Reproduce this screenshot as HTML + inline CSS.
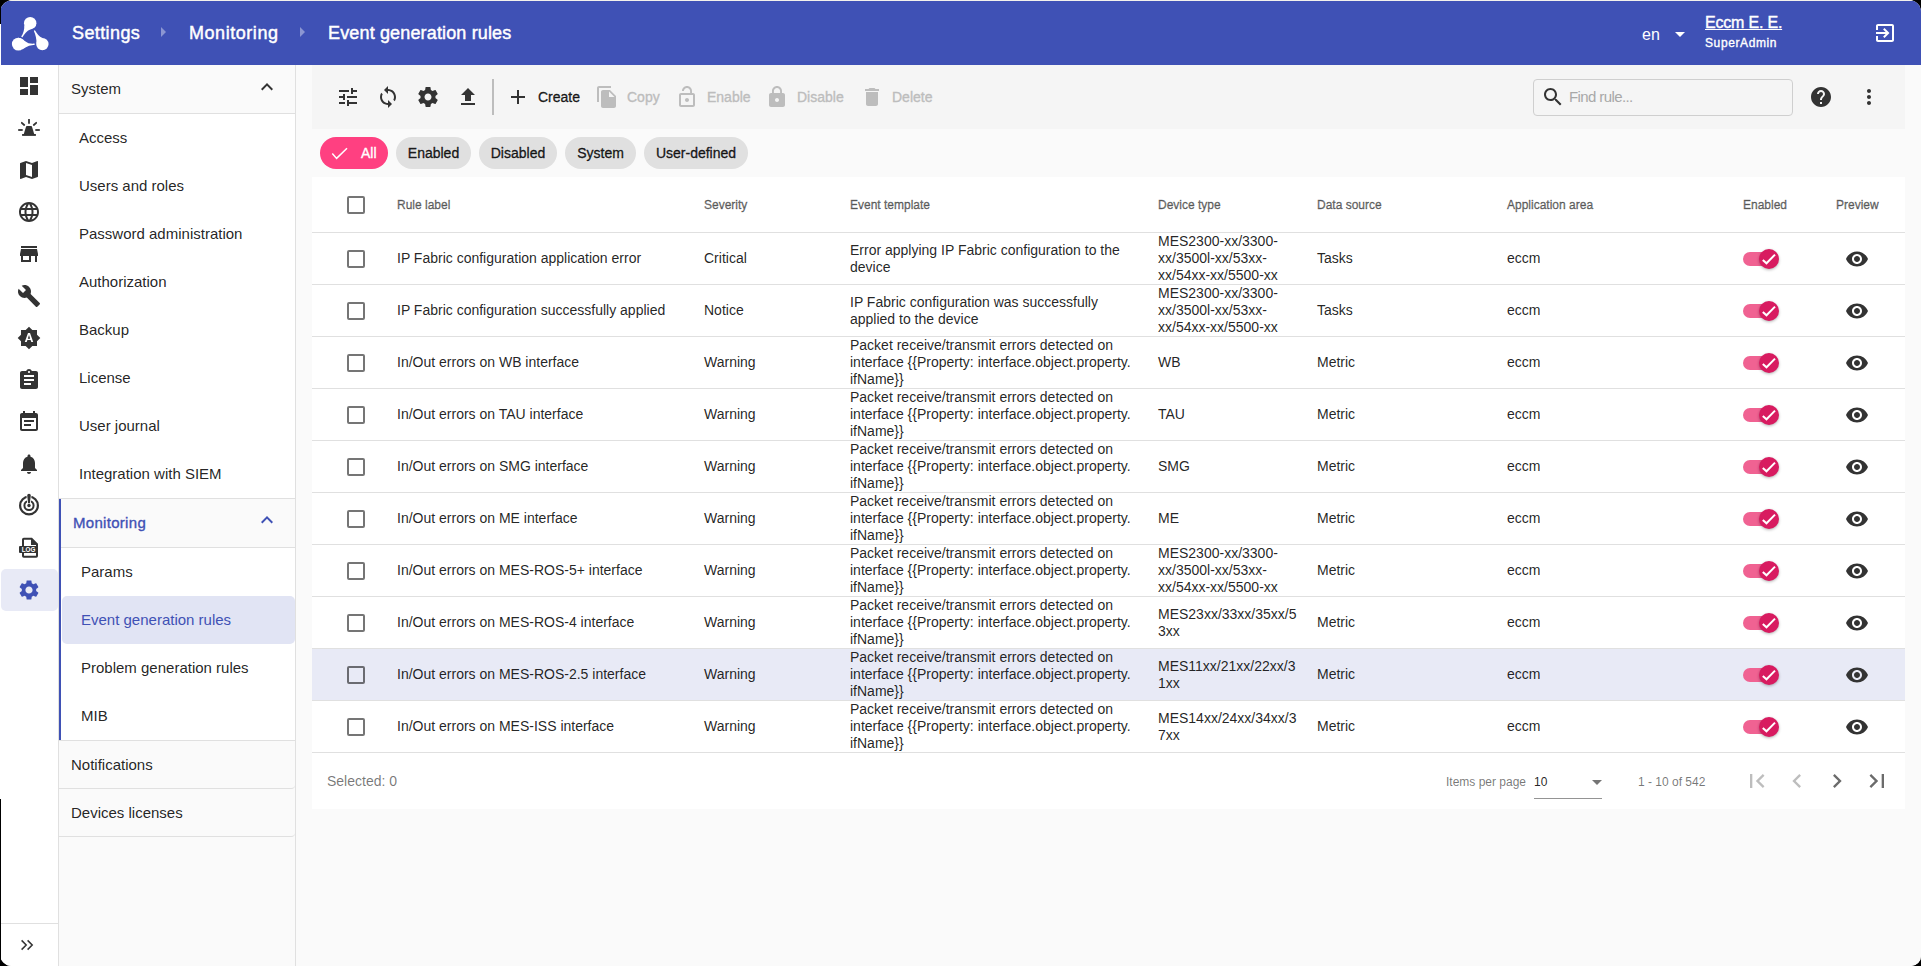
<!DOCTYPE html>
<html><head><meta charset="utf-8"><style>
*{box-sizing:border-box;margin:0;padding:0}
html,body{width:1921px;height:966px;overflow:hidden;background:#000}
body{font-family:"Liberation Sans",sans-serif;color:rgba(0,0,0,.87);position:relative}
.a{position:absolute}
svg{display:block}
.t{position:absolute;white-space:nowrap;line-height:1}
#win{position:absolute;left:0;top:0;width:1921px;height:966px;background:#fff;border-radius:13px 12px 10px 12px;overflow:hidden}
#hdr{position:absolute;left:1px;top:1px;width:1920px;height:64px;background:#3f51b5;color:#fff}
.bc{font-size:18px;font-weight:400;letter-spacing:.15px;top:23px;color:#fff;-webkit-text-stroke:.45px #fff}
.md{font-weight:400;-webkit-text-stroke:.4px currentColor}
#rail{position:absolute;left:0;top:65px;width:59px;height:901px;background:#fff;border-right:1px solid #e0e0e0}
.ri{position:absolute;left:17px;width:24px;height:24px;fill:#333}
#nav{position:absolute;left:59px;top:65px;width:237px;height:901px;background:#fafafa;border-right:1px solid #e0e0e0}
.ns{position:absolute;left:0;width:236px;background:#fafafa;border-bottom:1px solid #e0e0e0}
.nt{position:absolute;font-size:15px;white-space:nowrap;line-height:1;color:rgba(0,0,0,.87)}
#main{position:absolute;left:296px;top:65px;width:1625px;height:901px;background:#fafafa}
#tb{position:absolute;left:16px;top:0;width:1593px;height:64px;background:#f5f5f5}
.tl{position:absolute;top:25px;font-size:14px;font-weight:400;-webkit-text-stroke:.35px currentColor;line-height:1;white-space:nowrap}
.dis{color:#bdbdbd}
.chip{position:absolute;top:72px;height:32px;border-radius:16px;background:#e0e0e0;font-size:14px;font-weight:400;-webkit-text-stroke:.35px currentColor;line-height:32px;text-align:center;white-space:nowrap;color:rgba(0,0,0,.87)}
#card{position:absolute;left:16px;top:112px;width:1593px;height:632px;background:#fff}
.row{position:absolute;left:0;width:1593px;height:52px;border-bottom:1px solid #e0e0e0}
.cb{position:absolute;left:35px;width:18px;height:18px;border:2px solid rgba(0,0,0,.54);border-radius:2px}
.c{position:absolute;font-size:14px;line-height:17px;white-space:nowrap}
.hc{position:absolute;top:22px;font-size:12px;font-weight:400;-webkit-text-stroke:.4px currentColor;color:rgba(0,0,0,.54);line-height:1;white-space:nowrap}
</style></head><body><div id="win">
<div class="a" style="left:0;top:0;width:1921px;height:1px;background:#f3f1ec"></div>
<div id="hdr">
<svg class="a" style="left:-1px;top:-1px" width="60" height="60" viewBox="0 0 60 60"><g fill="#fff">
<circle cx="30.2" cy="23.2" r="6.2"/><circle cx="18.3" cy="44.1" r="6.4"/><circle cx="42.4" cy="44.1" r="6.2"/>
<path d="M24.3 25.5 C24.4 30 23.3 33.5 21.2 36.6 L22.3 37.4 C24.5 34 26.5 31 30.5 29.3 Z"/>
<path d="M18 37.8 C22.5 38 25 41.8 28.5 43.2 C30.5 43.7 32.5 43.7 34.6 43.6 L34.6 45.1 C31 45.2 27.5 45.8 22.5 49.5 Z"/>
<path d="M36.6 43 C36.4 39 35.8 35.5 33.8 30.8 L34.9 30.2 C37.2 33.8 39 36.6 42.5 37.9 Z"/>
</g></svg>
<div class="t bc" style="left:71px;letter-spacing:.4px">Settings</div>
<svg class="a" style="left:150px;top:19px" width="24" height="24" viewBox="0 0 24 24"><path d="M10 17l5-5-5-5v10z" fill="rgba(255,255,255,.4)"/></svg>
<div class="t bc" style="left:188px;letter-spacing:.55px">Monitoring</div>
<svg class="a" style="left:289px;top:19px" width="24" height="24" viewBox="0 0 24 24"><path d="M10 17l5-5-5-5v10z" fill="rgba(255,255,255,.4)"/></svg>
<div class="t bc" style="left:327px">Event generation rules</div>
<div class="t" style="left:1641px;top:26px;font-size:16px;color:#fff">en</div>
<svg class="a" style="left:1667px;top:21px" width="24" height="24" viewBox="0 0 24 24"><path d="M7 10l5 5 5-5z" fill="#fff"/></svg>
<div class="t" style="left:1704px;top:14px;font-size:16px;color:#fff;text-decoration:underline;-webkit-text-stroke:.4px #fff;letter-spacing:-.2px">Eccm E. E.</div>
<div class="t" style="left:1704px;top:36px;font-size:12px;-webkit-text-stroke:.35px #fff;letter-spacing:.6px;color:#fff">SuperAdmin</div>
<svg class="a" style="left:1872px;top:20px" width="24" height="24" viewBox="0 0 24 24"><path d="M10.09 15.59L11.5 17l5-5-5-5-1.41 1.41L12.67 11H3v2h9.67l-2.58 2.59zM19 3H5c-1.11 0-2 .9-2 2v4h2V5h14v14H5v-4H3v4c0 1.1.89 2 2 2h14c1.1 0 2-.9 2-2V5c0-1.1-.9-2-2-2z" fill="#fff"/></svg>
</div>
<div id="rail">
<svg class="ri" style="left:17px;top:9px" width="24" height="24" viewBox="0 0 24 24"><path d="M3 13h8V3H3v10zm0 8h8v-6H3v6zm10 0h8V11h-8v10zm0-18v6h8V3h-8z" fill="#333"/></svg>
<svg class="ri" style="left:17px;top:93px" width="24" height="24" viewBox="0 0 24 24"><path d="M20.5 3l-.16.03L15 5.1 9 3 3.36 4.9c-.21.07-.36.25-.36.48V20.5c0 .28.22.5.5.5l.16-.03L9 18.9l6 2.1 5.64-1.9c.21-.07.36-.25.36-.48V3.5c0-.28-.22-.5-.5-.5zM15 19l-6-2.11V5l6 2.11V19z" fill="#333"/></svg>
<svg class="ri" style="left:17px;top:135px" width="24" height="24" viewBox="0 0 24 24"><path d="M11.99 2C6.47 2 2 6.48 2 12s4.47 10 9.99 10C17.52 22 22 17.52 22 12S17.52 2 11.99 2zm6.93 6h-2.95c-.32-1.25-.78-2.45-1.38-3.56 1.84.63 3.37 1.91 4.33 3.56zM12 4.04c.83 1.2 1.48 2.53 1.91 3.96h-3.82c.43-1.43 1.08-2.76 1.91-3.96zM4.26 14C4.1 13.36 4 12.69 4 12s.1-1.36.26-2h3.38c-.08.66-.14 1.32-.14 2 0 .68.06 1.34.14 2H4.26zm.82 2h2.95c.32 1.25.78 2.45 1.38 3.56-1.84-.63-3.37-1.9-4.33-3.56zm2.95-8H5.08c.96-1.66 2.49-2.93 4.33-3.56C8.81 5.55 8.35 6.75 8.03 8zM12 19.96c-.83-1.2-1.48-2.53-1.91-3.96h3.82c-.43 1.43-1.08 2.76-1.91 3.96zM14.34 14H9.66c-.09-.66-.16-1.32-.16-2 0-.68.07-1.35.16-2h4.68c.09.65.16 1.32.16 2 0 .68-.07 1.34-.16 2zm.25 5.56c.6-1.11 1.06-2.31 1.38-3.56h2.95c-.96 1.65-2.49 2.93-4.33 3.56zM16.36 14c.08-.66.14-1.32.14-2 0-.68-.06-1.34-.14-2h3.38c.16.64.26 1.31.26 2s-.1 1.36-.26 2h-3.38z" fill="#333"/></svg>
<svg class="ri" style="left:17px;top:177px" width="24" height="24" viewBox="0 0 24 24"><path d="M20 4H4v2h16V4zm1 10v-2l-1-5H4l-1 5v2h1v6h10v-6h4v6h2v-6h1zm-9 4H6v-4h6v4z" fill="#333"/></svg>
<svg class="ri" style="left:17px;top:219px" width="24" height="24" viewBox="0 0 24 24"><path d="M22.7 19l-9.1-9.1c.9-2.3.4-5-1.5-6.9-2-2-5-2.4-7.4-1.3L9 6 6 9 1.6 4.7C.4 7.1.9 10.1 2.9 12.1c1.9 1.9 4.6 2.4 6.9 1.5l9.1 9.1c.4.4 1 .4 1.4 0l2.3-2.3c.5-.4.5-1.1.1-1.4z" fill="#333"/></svg>
<svg class="ri" style="left:17px;top:261px" width="24" height="24" viewBox="0 0 24 24"><path d="M10.85 12.65h2.3L12 9l-1.15 3.65zM20 8.69V4h-4.69L12 .69 8.69 4H4v4.69L.69 12 4 15.31V20h4.69L12 23.31 15.31 20H20v-4.69L23.31 12 20 8.69zM14.3 16l-.7-2h-3.2l-.7 2H7.8L11 7h2l3.2 9h-1.9z" fill="#333"/></svg>
<svg class="ri" style="left:17px;top:303px" width="24" height="24" viewBox="0 0 24 24"><path d="M19 3h-4.18C14.4 1.84 13.3 1 12 1c-1.3 0-2.4.84-2.82 2H5c-1.1 0-2 .9-2 2v14c0 1.1.9 2 2 2h14c1.1 0 2-.9 2-2V5c0-1.1-.9-2-2-2zm-7 0c.55 0 1 .45 1 1s-.45 1-1 1-1-.45-1-1 .45-1 1-1zm2 14H7v-2h7v2zm3-4H7v-2h10v2zm0-4H7V7h10v2z" fill="#333"/></svg>
<svg class="ri" style="left:17px;top:345px" width="24" height="24" viewBox="0 0 24 24"><path d="M17 10H7v2h10v-2zm2-7h-1V1h-2v2H8V1H6v2H5c-1.11 0-1.99.9-1.99 2L3 19c0 1.1.89 2 2 2h14c1.1 0 2-.9 2-2V5c0-1.1-.9-2-2-2zm0 16H5V8h14v11zm-5-5H7v2h7v-2z" fill="#333"/></svg>
<svg class="ri" style="left:17px;top:387px" width="24" height="24" viewBox="0 0 24 24"><path d="M12 22c1.1 0 2-.9 2-2h-4c0 1.1.89 2 2 2zm6-6v-5c0-3.07-1.64-5.64-4.5-6.32V4c0-.83-.67-1.5-1.5-1.5s-1.5.67-1.5 1.5v.68C7.63 5.36 6 7.920 6 11v5l-2 2v1h16v-1l-2-2z" fill="#333"/></svg>
<svg class="a" style="left:14px;top:47px" width="30" height="30" viewBox="0 0 30 30"><g fill="#333">
<rect x="14.1" y="7" width="1.8" height="4.8" rx=".3"/>
<path d="M7.8 10.8 L10.2 13" stroke="#333" stroke-width="1.8" stroke-linecap="round"/>
<path d="M22.2 10.8 L19.8 13" stroke="#333" stroke-width="1.8" stroke-linecap="round"/>
<rect x="4.2" y="17.1" width="4.5" height="1.8"/><rect x="21.3" y="17.1" width="4.5" height="1.8"/>
<path d="M12.8 14.1 H17.2 Q17.8 14.1 18 14.7 L20.2 22 H9.8 L12 14.7 Q12.2 14.1 12.8 14.1Z"/>
<rect x="8.1" y="22" width="13.8" height="1.9"/></g></svg>
<svg class="ri" style="top:428px" viewBox="0 0 24 24">
<circle cx="12" cy="12.5" r="8.9" fill="none" stroke="#333" stroke-width="2.2"/>
<circle cx="12" cy="12.5" r="4.6" fill="none" stroke="#333" stroke-width="2"/>
<path d="M9.2 0h5.6l-1.1 11h-3.4z" fill="#fff"/>
<path d="M10.2 2.6 a1.8 1.8 0 0 1 3.6 0 L12.9 10.3 h-1.8 Z" fill="#333"/>
<circle cx="12" cy="12.5" r="1.7" fill="#333"/></svg>
<svg class="ri" style="top:471px" viewBox="0 0 24 24">
<path fill="#333" fill-rule="evenodd" d="M6.8 1.8H15L21 7.8V20a1.8 1.8 0 0 1-1.8 1.8H6.8A1.8 1.8 0 0 1 5 20V3.6A1.8 1.8 0 0 1 6.8 1.8zM7 3.8V10h12V9h-5V3.8zM7 17v2.8h12V17z"/>
<rect x="2" y="10" width="19" height="7" rx="1" fill="#333"/>
<text x="11.6" y="15.6" font-size="6.3" font-weight="700" text-anchor="middle" font-family="Liberation Sans" fill="#fff">LOG</text></svg>
<div class="a" style="left:1px;top:504px;width:57px;height:42px;background:#e8eaf6;border-radius:5px"></div>
<svg class="a" style="left:17px;top:513px" width="24" height="24" viewBox="0 0 24 24"><path d="M19.14 12.94c.04-.3.06-.61.06-.94 0-.32-.02-.64-.07-.94l2.03-1.58c.18-.14.23-.41.12-.61l-1.92-3.32c-.12-.22-.37-.29-.59-.22l-2.39.96c-.5-.38-1.030-.7-1.62-.94l-.36-2.54c-.04-.24-.24-.41-.48-.41h-3.84c-.24 0-.43.17-.47.41l-.36 2.54c-.59.24-1.13.57-1.62.94l-2.39-.96c-.22-.08-.47 0-.59.22L2.74 8.87c-.12.21-.08.47.12.61l2.03 1.58c-.05.3-.09.63-.09.94s.02.64.07.94l-2.03 1.58c-.18.14-.23.41-.12.61l1.92 3.32c.12.22.37.29.59.22l2.39-.96c.5.38 1.03.7 1.62.94l.36 2.54c.05.24.24.41.48.41h3.84c.24 0 .44-.17.47-.41l.36-2.54c.59-.24 1.13-.56 1.62-.94l2.39.96c.22.08.47 0 .59-.22l1.92-3.32c.12-.22.07-.47-.12-.61l-2.01-1.58zM12 15.6c-1.98 0-3.6-1.62-3.6-3.6s1.62-3.6 3.6-3.6 3.6 1.62 3.6 3.6-1.62 3.6-3.6 3.6z" fill="#3f51b5"/></svg>
<div class="a" style="left:0;top:858px;width:58px;height:1px;background:#e0e0e0"></div>
<svg class="a" style="left:15px;top:868px" width="24" height="24" viewBox="0 0 24 24"><path d="M6.6 7.4 L11.2 12 L6.6 16.6 M12.6 7.4 L17.2 12 L12.6 16.6" fill="none" stroke="#333" stroke-width="1.5"/></svg>
</div>
<div id="nav">
<div class="ns" style="top:0;height:49px"></div>
<div class="nt" style="left:12px;top:16px">System</div>
<svg class="a" style="left:196px;top:10px" width="24" height="24" viewBox="0 0 24 24"><path d="M12 8l-6 6 1.41 1.41L12 10.83l4.59 4.58L18 14z" fill="#333"/></svg>
<div class="a" style="left:0;top:49px;width:236px;height:385px;background:#fff;border-bottom:1px solid #e0e0e0"></div>
<div class="nt" style="left:20px;top:65px">Access</div>
<div class="nt" style="left:20px;top:113px">Users and roles</div>
<div class="nt" style="left:20px;top:161px">Password administration</div>
<div class="nt" style="left:20px;top:209px">Authorization</div>
<div class="nt" style="left:20px;top:257px">Backup</div>
<div class="nt" style="left:20px;top:305px">License</div>
<div class="nt" style="left:20px;top:353px">User journal</div>
<div class="nt" style="left:20px;top:401px">Integration with SIEM</div>
<div class="a" style="left:0;top:434px;width:236px;height:242px;background:#fff;border-bottom:1px solid #e0e0e0"></div>
<div class="a" style="left:2px;top:434px;width:234px;height:49px;background:#fafafa;border-bottom:1px solid #e0e0e0"></div>
<div class="a" style="left:0;top:434px;width:2px;height:241px;background:#3f51b5"></div>
<div class="nt" style="left:14px;top:450px;color:#3f51b5;-webkit-text-stroke:.35px currentColor;letter-spacing:.3px">Monitoring</div>
<svg class="a" style="left:196px;top:443px" width="24" height="24" viewBox="0 0 24 24"><path d="M12 8l-6 6 1.41 1.41L12 10.83l4.59 4.58L18 14z" fill="#3f51b5"/></svg>
<div class="a" style="left:3px;top:531px;width:233px;height:48px;background:#e1e4f4;border-radius:5px"></div>
<div class="nt" style="left:22px;top:499px">Params</div>
<div class="nt" style="left:22px;top:547px;color:#3f51b5">Event generation rules</div>
<div class="nt" style="left:22px;top:595px">Problem generation rules</div>
<div class="nt" style="left:22px;top:643px">MIB</div>
<div class="ns" style="top:676px;height:48px;border-bottom-right-radius:4px"></div>
<div class="nt" style="left:12px;top:692px">Notifications</div>
<div class="ns" style="top:724px;height:48px;border-bottom-right-radius:4px"></div>
<div class="nt" style="left:12px;top:740px">Devices licenses</div>
</div>
<div id="main">
<div id="tb">
<svg class="a" style="left:24px;top:20px" width="24" height="24" viewBox="0 0 24 24"><path d="M3 17v2h6v-2H3zM3 5v2h10V5H3zm10 16v-2h8v-2h-8v-2h-2v6h2zM7 9v2H3v2h4v2h2V9H7zm14 4v-2H11v2h10zm-6-4h2V7h4V5h-4V3h-2v6z" fill="#333"/></svg>
<svg class="a" style="left:64px;top:20px" width="24" height="24" viewBox="0 0 24 24"><path d="M12 4V1L8 5l4 4V6c3.31 0 6 2.69 6 6 0 1.01-.25 1.97-.7 2.8l1.46 1.46C19.54 15.03 20 13.57 20 12c0-4.42-3.58-8-8-8zm0 14c-3.31 0-6-2.69-6-6 0-1.01.25-1.97.7-2.8L5.24 7.74C4.46 8.97 4 10.43 4 12c0 4.42 3.58 8 8 8v3l4-4-4-4v3z" fill="#333"/></svg>
<svg class="a" style="left:104px;top:20px" width="24" height="24" viewBox="0 0 24 24"><path d="M19.43 12.98c.04-.32.07-.64.07-.98s-.03-.66-.07-.98l2.11-1.65c.19-.15.24-.42.12-.64l-2-3.46c-.12-.22-.39-.3-.61-.22l-2.49 1c-.52-.4-1.08-.73-1.69-.98l-.38-2.65C14.46 2.18 14.25 2 14 2h-4c-.25 0-.46.18-.49.42l-.38 2.65c-.61.25-1.17.59-1.69.98l-2.49-1c-.23-.09-.49 0-.61.22l-2 3.46c-.13.22-.07.49.12.64l2.11 1.65c-.04.32-.07.65-.07.98s.03.66.07.98l-2.11 1.65c-.19.15-.24.42-.12.64l2 3.46c.12.22.39.3.61.22l2.49-1c.52.4 1.08.73 1.69.98l.38 2.65c.03.24.24.42.49.42h4c.25 0 .46-.18.49-.42l.38-2.65c.61-.25 1.17-.59 1.69-.98l2.49 1c.23.09.49 0 .61-.22l2-3.46c.12-.22.07-.49-.12-.64l-2.11-1.65zM12 15.5c-1.93 0-3.5-1.57-3.5-3.5s1.57-3.5 3.5-3.5 3.5 1.57 3.5 3.5-1.57 3.5-3.5 3.5z" fill="#333"/></svg>
<svg class="a" style="left:144px;top:20px" width="24" height="24" viewBox="0 0 24 24"><path d="M9 16h6v-6h4l-7-7-7 7h4zm-4 2h14v2H5z" fill="#333"/></svg>
<div class="a" style="left:180px;top:14px;width:2px;height:36px;background:#bdbdbd"></div>
<svg class="a" style="left:194px;top:20px" width="24" height="24" viewBox="0 0 24 24"><path d="M19 13h-6v6h-2v-6H5v-2h6V5h2v6h6v2z" fill="#333"/></svg>
<div class="tl" style="left:226px">Create</div>
<svg class="a" style="left:283px;top:20px" width="24" height="24" viewBox="0 0 24 24"><path d="M16 1H4c-1.1 0-2 .9-2 2v14h2V3h12V1zm-1 4l6 6v10c0 1.1-.9 2-2 2H7.99C6.89 23 6 22.1 6 21l.01-14c0-1.1.89-2 1.99-2h7zm-1 7h5.5L14 6.5V12z" fill="#bdbdbd"/></svg>
<div class="tl dis" style="left:315px">Copy</div>
<svg class="a" style="left:363px;top:20px" width="24" height="24" viewBox="0 0 24 24"><path d="M12 17c1.1 0 2-.9 2-2s-.9-2-2-2-2 .9-2 2 .9 2 2 2zm6-9h-1V6c0-2.76-2.24-5-5-5S7 3.24 7 6h1.9c0-1.71 1.39-3.1 3.1-3.1 1.71 0 3.1 1.39 3.1 3.1v2H6c-1.1 0-2 .9-2 2v10c0 1.1.9 2 2 2h12c1.1 0 2-.9 2-2V10c0-1.1-.9-2-2-2zm0 12H6V10h12v10z" fill="#bdbdbd"/></svg>
<div class="tl dis" style="left:395px">Enable</div>
<svg class="a" style="left:453px;top:20px" width="24" height="24" viewBox="0 0 24 24"><path d="M18 8h-1V6c0-2.76-2.24-5-5-5S7 3.24 7 6v2H6c-1.1 0-2 .9-2 2v10c0 1.1.9 2 2 2h12c1.1 0 2-.9 2-2V10c0-1.1-.9-2-2-2zm-6 9c-1.1 0-2-.9-2-2s.9-2 2-2 2 .9 2 2-.9 2-2 2zm3.1-9H8.9V6c0-1.71 1.39-3.1 3.1-3.1 1.71 0 3.1 1.39 3.1 3.1v2z" fill="#bdbdbd"/></svg>
<div class="tl dis" style="left:485px">Disable</div>
<svg class="a" style="left:548px;top:20px" width="24" height="24" viewBox="0 0 24 24"><path d="M6 19c0 1.1.9 2 2 2h8c1.1 0 2-.9 2-2V7H6v12zM19 4h-3.5l-1-1h-5l-1 1H5v2h14V4z" fill="#bdbdbd"/></svg>
<div class="tl dis" style="left:580px">Delete</div>
<div class="a" style="left:1221px;top:14px;width:260px;height:37px;border:1px solid #cfcfcf;border-radius:4px;background:#f5f5f5"></div>
<svg class="a" style="left:1229px;top:20px" width="24" height="24" viewBox="0 0 24 24"><path d="M15.5 14h-.79l-.28-.27C15.41 12.59 16 11.11 16 9.5 16 5.910 13.09 3 9.5 3S3 5.91 3 9.5 5.91 16 9.5 16c1.61 0 3.09-.59 4.23-1.57l.27.28v.79l5 4.99L20.49 19l-4.99-5zm-6 0C7.01 14 5 11.99 5 9.5S7.01 5 9.5 5 14 7.01 14 9.5 11.99 14 9.5 14z" fill="#333"/></svg>
<div class="t" style="left:1257px;top:24px;font-size:15px;letter-spacing:-.6px;color:#a8a8a8">Find rule...</div>
<svg class="a" style="left:1497px;top:20px" width="24" height="24" viewBox="0 0 24 24"><path d="M12 2C6.48 2 2 6.48 2 12s4.48 10 10 10 10-4.48 10-10S17.52 2 12 2zm1 17h-2v-2h2v2zm2.07-7.75l-.9.92C13.45 12.9 13 13.5 13 15h-2v-.5c0-1.1.45-2.1 1.17-2.83l1.24-1.26c.37-.36.59-.86.59-1.41 0-1.1-.9-2-2-2s-2 .9-2 2H8c0-2.21 1.79-4 4-4s4 1.79 4 4c0 .88-.36 1.68-.93 2.25z" fill="#333"/></svg>
<svg class="a" style="left:1545px;top:20px" width="24" height="24" viewBox="0 0 24 24"><path d="M12 8c1.1 0 2-.9 2-2s-.9-2-2-2-2 .9-2 2 .9 2 2 2zm0 2c-1.1 0-2 .9-2 2s.9 2 2 2 2-.9 2-2-.9-2-2-2zm0 6c-1.1 0-2 .9-2 2s.9 2 2 2 2-.9 2-2-.9-2-2-2z" fill="#333"/></svg>
</div>
<div class="chip" style="left:24px;width:68px;background:#ff4081;color:#fff;text-align:left;padding-left:41px">All</div>
<svg class="a" style="left:24px;top:72px" width="40" height="32" viewBox="0 0 40 32"><path d="M12.3 16.6 L16.6 21.4 L27 11.2" fill="none" stroke="#fff" stroke-width="1.5"/></svg>
<div class="chip" style="left:100px;width:75px">Enabled</div>
<div class="chip" style="left:183px;width:78px">Disabled</div>
<div class="chip" style="left:269px;width:71px">System</div>
<div class="chip" style="left:348px;width:104px">User-defined</div>
<div id="card">
<div class="row" style="top:0;height:56px"></div>
<div class="cb" style="top:19px"></div>
<div class="hc" style="left:85px">Rule label</div>
<div class="hc" style="left:392px">Severity</div>
<div class="hc" style="left:538px">Event template</div>
<div class="hc" style="left:846px">Device type</div>
<div class="hc" style="left:1005px">Data source</div>
<div class="hc" style="left:1195px">Application area</div>
<div class="hc" style="left:1431px">Enabled</div>
<div class="hc" style="left:1524px">Preview</div>
<div class="row" style="top:56px">
<div class="cb" style="top:17px"></div>
<div class="c" style="left:85px;top:17px">IP Fabric configuration application error</div>
<div class="c" style="left:392px;top:17px">Critical</div>
<div class="c" style="left:538px;top:9px">Error applying IP Fabric configuration to the<br>device</div>
<div class="c" style="left:846px;top:0px">MES2300-xx/3300-<br>xx/3500l-xx/53xx-<br>xx/54xx-xx/5500-xx</div>
<div class="c" style="left:1005px;top:17px">Tasks</div>
<div class="c" style="left:1195px;top:17px">eccm</div>
<div class="a" style="left:1431px;top:19px;width:34px;height:14px;border-radius:7px;background:#f06292"></div>
<div class="a" style="left:1447px;top:16px;width:20px;height:20px;border-radius:50%;background:#d81b60;box-shadow:0 1px 3px rgba(0,0,0,.3)"></div>
<svg class="a" style="left:1447px;top:16px" width="20" height="20" viewBox="0 0 20 20"><path d="M3.8 10.9 L7.5 14.3 L16 5.6" fill="none" stroke="#fff" stroke-width="2"/></svg>
<svg class="a" style="left:1533px;top:14px" width="24" height="24" viewBox="0 0 24 24"><path d="M12 4.5C7 4.5 2.73 7.61 1 12c1.73 4.39 6 7.5 11 7.5s9.27-3.11 11-7.5c-1.73-4.39-6-7.5-11-7.5zM12 17c-2.76 0-5-2.24-5-5s2.24-5 5-5 5 2.24 5 5-2.24 5-5 5zm0-8c-1.66 0-3 1.34-3 3s1.34 3 3 3 3-1.34 3-3-1.34-3-3-3z" fill="#333"/></svg>
</div>
<div class="row" style="top:108px">
<div class="cb" style="top:17px"></div>
<div class="c" style="left:85px;top:17px">IP Fabric configuration successfully applied</div>
<div class="c" style="left:392px;top:17px">Notice</div>
<div class="c" style="left:538px;top:9px">IP Fabric configuration was successfully<br>applied to the device</div>
<div class="c" style="left:846px;top:0px">MES2300-xx/3300-<br>xx/3500l-xx/53xx-<br>xx/54xx-xx/5500-xx</div>
<div class="c" style="left:1005px;top:17px">Tasks</div>
<div class="c" style="left:1195px;top:17px">eccm</div>
<div class="a" style="left:1431px;top:19px;width:34px;height:14px;border-radius:7px;background:#f06292"></div>
<div class="a" style="left:1447px;top:16px;width:20px;height:20px;border-radius:50%;background:#d81b60;box-shadow:0 1px 3px rgba(0,0,0,.3)"></div>
<svg class="a" style="left:1447px;top:16px" width="20" height="20" viewBox="0 0 20 20"><path d="M3.8 10.9 L7.5 14.3 L16 5.6" fill="none" stroke="#fff" stroke-width="2"/></svg>
<svg class="a" style="left:1533px;top:14px" width="24" height="24" viewBox="0 0 24 24"><path d="M12 4.5C7 4.5 2.73 7.61 1 12c1.73 4.39 6 7.5 11 7.5s9.27-3.11 11-7.5c-1.73-4.39-6-7.5-11-7.5zM12 17c-2.76 0-5-2.24-5-5s2.24-5 5-5 5 2.24 5 5-2.24 5-5 5zm0-8c-1.66 0-3 1.34-3 3s1.34 3 3 3 3-1.34 3-3-1.34-3-3-3z" fill="#333"/></svg>
</div>
<div class="row" style="top:160px">
<div class="cb" style="top:17px"></div>
<div class="c" style="left:85px;top:17px">In/Out errors on WB interface</div>
<div class="c" style="left:392px;top:17px">Warning</div>
<div class="c" style="left:538px;top:0px">Packet receive/transmit errors detected on<br>interface {{Property: interface.object.property.<br>ifName}}</div>
<div class="c" style="left:846px;top:17px">WB</div>
<div class="c" style="left:1005px;top:17px">Metric</div>
<div class="c" style="left:1195px;top:17px">eccm</div>
<div class="a" style="left:1431px;top:19px;width:34px;height:14px;border-radius:7px;background:#f06292"></div>
<div class="a" style="left:1447px;top:16px;width:20px;height:20px;border-radius:50%;background:#d81b60;box-shadow:0 1px 3px rgba(0,0,0,.3)"></div>
<svg class="a" style="left:1447px;top:16px" width="20" height="20" viewBox="0 0 20 20"><path d="M3.8 10.9 L7.5 14.3 L16 5.6" fill="none" stroke="#fff" stroke-width="2"/></svg>
<svg class="a" style="left:1533px;top:14px" width="24" height="24" viewBox="0 0 24 24"><path d="M12 4.5C7 4.5 2.73 7.61 1 12c1.73 4.39 6 7.5 11 7.5s9.27-3.11 11-7.5c-1.73-4.39-6-7.5-11-7.5zM12 17c-2.76 0-5-2.24-5-5s2.24-5 5-5 5 2.24 5 5-2.24 5-5 5zm0-8c-1.66 0-3 1.34-3 3s1.34 3 3 3 3-1.34 3-3-1.34-3-3-3z" fill="#333"/></svg>
</div>
<div class="row" style="top:212px">
<div class="cb" style="top:17px"></div>
<div class="c" style="left:85px;top:17px">In/Out errors on TAU interface</div>
<div class="c" style="left:392px;top:17px">Warning</div>
<div class="c" style="left:538px;top:0px">Packet receive/transmit errors detected on<br>interface {{Property: interface.object.property.<br>ifName}}</div>
<div class="c" style="left:846px;top:17px">TAU</div>
<div class="c" style="left:1005px;top:17px">Metric</div>
<div class="c" style="left:1195px;top:17px">eccm</div>
<div class="a" style="left:1431px;top:19px;width:34px;height:14px;border-radius:7px;background:#f06292"></div>
<div class="a" style="left:1447px;top:16px;width:20px;height:20px;border-radius:50%;background:#d81b60;box-shadow:0 1px 3px rgba(0,0,0,.3)"></div>
<svg class="a" style="left:1447px;top:16px" width="20" height="20" viewBox="0 0 20 20"><path d="M3.8 10.9 L7.5 14.3 L16 5.6" fill="none" stroke="#fff" stroke-width="2"/></svg>
<svg class="a" style="left:1533px;top:14px" width="24" height="24" viewBox="0 0 24 24"><path d="M12 4.5C7 4.5 2.73 7.61 1 12c1.73 4.39 6 7.5 11 7.5s9.27-3.11 11-7.5c-1.73-4.39-6-7.5-11-7.5zM12 17c-2.76 0-5-2.24-5-5s2.24-5 5-5 5 2.24 5 5-2.24 5-5 5zm0-8c-1.66 0-3 1.34-3 3s1.34 3 3 3 3-1.34 3-3-1.34-3-3-3z" fill="#333"/></svg>
</div>
<div class="row" style="top:264px">
<div class="cb" style="top:17px"></div>
<div class="c" style="left:85px;top:17px">In/Out errors on SMG interface</div>
<div class="c" style="left:392px;top:17px">Warning</div>
<div class="c" style="left:538px;top:0px">Packet receive/transmit errors detected on<br>interface {{Property: interface.object.property.<br>ifName}}</div>
<div class="c" style="left:846px;top:17px">SMG</div>
<div class="c" style="left:1005px;top:17px">Metric</div>
<div class="c" style="left:1195px;top:17px">eccm</div>
<div class="a" style="left:1431px;top:19px;width:34px;height:14px;border-radius:7px;background:#f06292"></div>
<div class="a" style="left:1447px;top:16px;width:20px;height:20px;border-radius:50%;background:#d81b60;box-shadow:0 1px 3px rgba(0,0,0,.3)"></div>
<svg class="a" style="left:1447px;top:16px" width="20" height="20" viewBox="0 0 20 20"><path d="M3.8 10.9 L7.5 14.3 L16 5.6" fill="none" stroke="#fff" stroke-width="2"/></svg>
<svg class="a" style="left:1533px;top:14px" width="24" height="24" viewBox="0 0 24 24"><path d="M12 4.5C7 4.5 2.73 7.61 1 12c1.73 4.39 6 7.5 11 7.5s9.27-3.11 11-7.5c-1.73-4.39-6-7.5-11-7.5zM12 17c-2.76 0-5-2.24-5-5s2.24-5 5-5 5 2.24 5 5-2.24 5-5 5zm0-8c-1.66 0-3 1.34-3 3s1.34 3 3 3 3-1.34 3-3-1.34-3-3-3z" fill="#333"/></svg>
</div>
<div class="row" style="top:316px">
<div class="cb" style="top:17px"></div>
<div class="c" style="left:85px;top:17px">In/Out errors on ME interface</div>
<div class="c" style="left:392px;top:17px">Warning</div>
<div class="c" style="left:538px;top:0px">Packet receive/transmit errors detected on<br>interface {{Property: interface.object.property.<br>ifName}}</div>
<div class="c" style="left:846px;top:17px">ME</div>
<div class="c" style="left:1005px;top:17px">Metric</div>
<div class="c" style="left:1195px;top:17px">eccm</div>
<div class="a" style="left:1431px;top:19px;width:34px;height:14px;border-radius:7px;background:#f06292"></div>
<div class="a" style="left:1447px;top:16px;width:20px;height:20px;border-radius:50%;background:#d81b60;box-shadow:0 1px 3px rgba(0,0,0,.3)"></div>
<svg class="a" style="left:1447px;top:16px" width="20" height="20" viewBox="0 0 20 20"><path d="M3.8 10.9 L7.5 14.3 L16 5.6" fill="none" stroke="#fff" stroke-width="2"/></svg>
<svg class="a" style="left:1533px;top:14px" width="24" height="24" viewBox="0 0 24 24"><path d="M12 4.5C7 4.5 2.73 7.61 1 12c1.73 4.39 6 7.5 11 7.5s9.27-3.11 11-7.5c-1.73-4.39-6-7.5-11-7.5zM12 17c-2.76 0-5-2.24-5-5s2.24-5 5-5 5 2.24 5 5-2.24 5-5 5zm0-8c-1.66 0-3 1.34-3 3s1.34 3 3 3 3-1.34 3-3-1.34-3-3-3z" fill="#333"/></svg>
</div>
<div class="row" style="top:368px">
<div class="cb" style="top:17px"></div>
<div class="c" style="left:85px;top:17px">In/Out errors on MES-ROS-5+ interface</div>
<div class="c" style="left:392px;top:17px">Warning</div>
<div class="c" style="left:538px;top:0px">Packet receive/transmit errors detected on<br>interface {{Property: interface.object.property.<br>ifName}}</div>
<div class="c" style="left:846px;top:0px">MES2300-xx/3300-<br>xx/3500l-xx/53xx-<br>xx/54xx-xx/5500-xx</div>
<div class="c" style="left:1005px;top:17px">Metric</div>
<div class="c" style="left:1195px;top:17px">eccm</div>
<div class="a" style="left:1431px;top:19px;width:34px;height:14px;border-radius:7px;background:#f06292"></div>
<div class="a" style="left:1447px;top:16px;width:20px;height:20px;border-radius:50%;background:#d81b60;box-shadow:0 1px 3px rgba(0,0,0,.3)"></div>
<svg class="a" style="left:1447px;top:16px" width="20" height="20" viewBox="0 0 20 20"><path d="M3.8 10.9 L7.5 14.3 L16 5.6" fill="none" stroke="#fff" stroke-width="2"/></svg>
<svg class="a" style="left:1533px;top:14px" width="24" height="24" viewBox="0 0 24 24"><path d="M12 4.5C7 4.5 2.73 7.61 1 12c1.73 4.39 6 7.5 11 7.5s9.27-3.11 11-7.5c-1.73-4.39-6-7.5-11-7.5zM12 17c-2.76 0-5-2.24-5-5s2.24-5 5-5 5 2.24 5 5-2.24 5-5 5zm0-8c-1.66 0-3 1.34-3 3s1.34 3 3 3 3-1.34 3-3-1.34-3-3-3z" fill="#333"/></svg>
</div>
<div class="row" style="top:420px">
<div class="cb" style="top:17px"></div>
<div class="c" style="left:85px;top:17px">In/Out errors on MES-ROS-4 interface</div>
<div class="c" style="left:392px;top:17px">Warning</div>
<div class="c" style="left:538px;top:0px">Packet receive/transmit errors detected on<br>interface {{Property: interface.object.property.<br>ifName}}</div>
<div class="c" style="left:846px;top:9px">MES23xx/33xx/35xx/5<br>3xx</div>
<div class="c" style="left:1005px;top:17px">Metric</div>
<div class="c" style="left:1195px;top:17px">eccm</div>
<div class="a" style="left:1431px;top:19px;width:34px;height:14px;border-radius:7px;background:#f06292"></div>
<div class="a" style="left:1447px;top:16px;width:20px;height:20px;border-radius:50%;background:#d81b60;box-shadow:0 1px 3px rgba(0,0,0,.3)"></div>
<svg class="a" style="left:1447px;top:16px" width="20" height="20" viewBox="0 0 20 20"><path d="M3.8 10.9 L7.5 14.3 L16 5.6" fill="none" stroke="#fff" stroke-width="2"/></svg>
<svg class="a" style="left:1533px;top:14px" width="24" height="24" viewBox="0 0 24 24"><path d="M12 4.5C7 4.5 2.73 7.61 1 12c1.73 4.39 6 7.5 11 7.5s9.27-3.11 11-7.5c-1.73-4.39-6-7.5-11-7.5zM12 17c-2.76 0-5-2.24-5-5s2.24-5 5-5 5 2.24 5 5-2.24 5-5 5zm0-8c-1.66 0-3 1.34-3 3s1.34 3 3 3 3-1.34 3-3-1.34-3-3-3z" fill="#333"/></svg>
</div>
<div class="row" style="top:472px;background:#e8eaf6">
<div class="cb" style="top:17px"></div>
<div class="c" style="left:85px;top:17px">In/Out errors on MES-ROS-2.5 interface</div>
<div class="c" style="left:392px;top:17px">Warning</div>
<div class="c" style="left:538px;top:0px">Packet receive/transmit errors detected on<br>interface {{Property: interface.object.property.<br>ifName}}</div>
<div class="c" style="left:846px;top:9px">MES11xx/21xx/22xx/3<br>1xx</div>
<div class="c" style="left:1005px;top:17px">Metric</div>
<div class="c" style="left:1195px;top:17px">eccm</div>
<div class="a" style="left:1431px;top:19px;width:34px;height:14px;border-radius:7px;background:#f06292"></div>
<div class="a" style="left:1447px;top:16px;width:20px;height:20px;border-radius:50%;background:#d81b60;box-shadow:0 1px 3px rgba(0,0,0,.3)"></div>
<svg class="a" style="left:1447px;top:16px" width="20" height="20" viewBox="0 0 20 20"><path d="M3.8 10.9 L7.5 14.3 L16 5.6" fill="none" stroke="#fff" stroke-width="2"/></svg>
<svg class="a" style="left:1533px;top:14px" width="24" height="24" viewBox="0 0 24 24"><path d="M12 4.5C7 4.5 2.73 7.61 1 12c1.73 4.39 6 7.5 11 7.5s9.27-3.11 11-7.5c-1.73-4.39-6-7.5-11-7.5zM12 17c-2.76 0-5-2.24-5-5s2.24-5 5-5 5 2.24 5 5-2.24 5-5 5zm0-8c-1.66 0-3 1.34-3 3s1.34 3 3 3 3-1.34 3-3-1.34-3-3-3z" fill="#333"/></svg>
</div>
<div class="row" style="top:524px">
<div class="cb" style="top:17px"></div>
<div class="c" style="left:85px;top:17px">In/Out errors on MES-ISS interface</div>
<div class="c" style="left:392px;top:17px">Warning</div>
<div class="c" style="left:538px;top:0px">Packet receive/transmit errors detected on<br>interface {{Property: interface.object.property.<br>ifName}}</div>
<div class="c" style="left:846px;top:9px">MES14xx/24xx/34xx/3<br>7xx</div>
<div class="c" style="left:1005px;top:17px">Metric</div>
<div class="c" style="left:1195px;top:17px">eccm</div>
<div class="a" style="left:1431px;top:19px;width:34px;height:14px;border-radius:7px;background:#f06292"></div>
<div class="a" style="left:1447px;top:16px;width:20px;height:20px;border-radius:50%;background:#d81b60;box-shadow:0 1px 3px rgba(0,0,0,.3)"></div>
<svg class="a" style="left:1447px;top:16px" width="20" height="20" viewBox="0 0 20 20"><path d="M3.8 10.9 L7.5 14.3 L16 5.6" fill="none" stroke="#fff" stroke-width="2"/></svg>
<svg class="a" style="left:1533px;top:14px" width="24" height="24" viewBox="0 0 24 24"><path d="M12 4.5C7 4.5 2.73 7.61 1 12c1.73 4.39 6 7.5 11 7.5s9.27-3.11 11-7.5c-1.73-4.39-6-7.5-11-7.5zM12 17c-2.76 0-5-2.24-5-5s2.24-5 5-5 5 2.24 5 5-2.24 5-5 5zm0-8c-1.66 0-3 1.34-3 3s1.34 3 3 3 3-1.34 3-3-1.34-3-3-3z" fill="#333"/></svg>
</div>
<div class="t" style="left:15px;top:597px;font-size:14px;color:rgba(0,0,0,.54)">Selected: 0</div>
<div class="t" style="left:1134px;top:599px;font-size:12px;color:rgba(0,0,0,.54)">Items per page</div>
<div class="t" style="left:1222px;top:599px;font-size:12px;color:rgba(0,0,0,.87)">10</div>
<svg class="a" style="left:1273px;top:593px" width="24" height="24" viewBox="0 0 24 24"><path d="M7 10l5 5 5-5z" fill="rgba(0,0,0,.54)"/></svg>
<div class="a" style="left:1222px;top:621px;width:68px;height:1px;background:rgba(0,0,0,.42)"></div>
<div class="t" style="left:1326px;top:599px;font-size:12px;color:rgba(0,0,0,.54)">1 - 10 of 542</div>
<svg class="a" style="left:1431px;top:590px" width="28" height="28" viewBox="0 0 24 24"><path d="M18.41 16.59L13.82 12l4.59-4.59L17 6l-6 6 6 6zM6 6h2v12H6z" fill="rgba(0,0,0,.26)"/></svg>
<svg class="a" style="left:1471px;top:590px" width="28" height="28" viewBox="0 0 24 24"><path d="M15.41 7.41L14 6l-6 6 6 6 1.41-1.41L10.83 12z" fill="rgba(0,0,0,.26)"/></svg>
<svg class="a" style="left:1511px;top:590px" width="28" height="28" viewBox="0 0 24 24"><path d="M10 6L8.59 7.41 13.17 12l-4.58 4.59L10 18l6-6z" fill="rgba(0,0,0,.58)"/></svg>
<svg class="a" style="left:1551px;top:590px" width="28" height="28" viewBox="0 0 24 24"><path d="M5.59 7.41L10.18 12l-4.59 4.59L7 18l6-6-6-6zM16 6h2v12h-2z" fill="rgba(0,0,0,.58)"/></svg>
</div>
</div>
</div>
<div class="a" style="left:0;top:0;width:1px;height:24px;background:#000"></div>
<div class="a" style="left:0;top:799px;width:1px;height:167px;background:#000"></div>
</body></html>
